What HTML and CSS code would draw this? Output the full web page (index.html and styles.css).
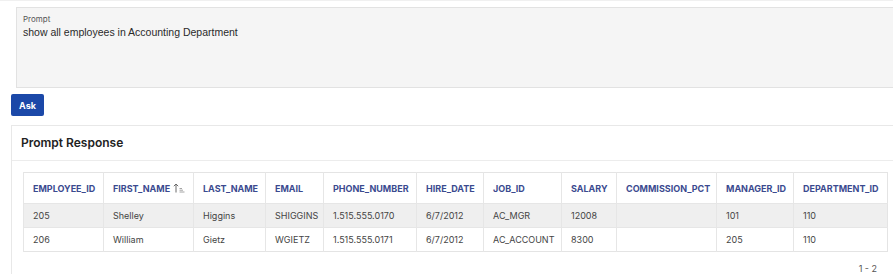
FILE: index.html
```html
<!DOCTYPE html>
<html>
<head>
<meta charset="UTF-8">
<title>Prompt</title>
<link rel="stylesheet" href="styles.css">
</head>
<body>
<div class="page">
  <div class="prompt">
    <label>Prompt</label>
    <div class="prompt-text">show all employees in Accounting Department</div>
  </div>
  <button class="ask">Ask</button>

  <div class="region">
    <div class="region-head">Prompt Response</div>
    <div class="region-body">
      <table class="grid">
        <colgroup>
          <col style="width:80px"><col style="width:90px"><col style="width:72px"><col style="width:58px">
          <col style="width:93px"><col style="width:67px"><col style="width:78px"><col style="width:55px">
          <col style="width:100px"><col style="width:77px"><col style="width:94px">
        </colgroup>
        <thead>
          <tr>
            <th>EMPLOYEE_ID</th>
            <th>FIRST_NAME <svg class="sort" width="12" height="10" viewBox="0 0 12 10"><path d="M3 9.5V1M0.8 3.2L3 1l2.2 2.2" fill="none" stroke="#6a6a6a" stroke-width="1"/><path d="M6.5 5.5h2.5M6.5 7.2h3.5M6.5 9h5" stroke="#9a9a9a" stroke-width="0.9"/></svg></th>
            <th>LAST_NAME</th>
            <th>EMAIL</th>
            <th>PHONE_NUMBER</th>
            <th>HIRE_DATE</th>
            <th>JOB_ID</th>
            <th>SALARY</th>
            <th>COMMISSION_PCT</th>
            <th>MANAGER_ID</th>
            <th>DEPARTMENT_ID</th>
          </tr>
        </thead>
        <tbody>
          <tr class="alt">
            <td>205</td><td>Shelley</td><td>Higgins</td><td>SHIGGINS</td><td>1.515.555.0170</td><td>6/7/2012</td><td>AC_MGR</td><td>12008</td><td></td><td>101</td><td>110</td>
          </tr>
          <tr>
            <td>206</td><td>William</td><td>Gietz</td><td>WGIETZ</td><td>1.515.555.0171</td><td>6/7/2012</td><td>AC_ACCOUNT</td><td>8300</td><td></td><td>205</td><td>110</td>
          </tr>
        </tbody>
      </table>
      <div class="pager">1 - 2</div>
    </div>
  </div>
</div>
</body>
</html>
```

FILE: styles.css
```css
body{margin:0;font-family:Inter,"Noto Sans",sans-serif;background:#fff;color:#333;overflow:hidden}
.page{width:920px;padding-top:1px;border-top:1px solid #f0f0f0}
.prompt{margin:5px 0 0 16px;height:81px;background:#f5f5f5;border:1px solid #e2e2e2;padding:6px 6px 0 6px;box-sizing:border-box}
.prompt label{display:block;font-size:8px;color:#555;line-height:10px}
.prompt-text{font-family:"Liberation Sans",Arial,sans-serif;font-size:10.5px;color:#2a2a2a;margin-top:2px}
.ask{display:block;margin:6px 0 0 11px;width:33px;height:22px;background:#1b48a8;color:#fff;border:none;border-radius:2px;font-family:inherit;font-size:9px;font-weight:700;padding:0}
.region{margin:9px 0 0 11px;border:1px solid #e8e8e8;border-right:none;border-bottom:none;background:#fff}
.region-head{height:34px;line-height:34px;padding-left:9px;font-size:12px;font-weight:600;color:#222;border-bottom:1px solid #ececec}
.region-body{padding:11px 0 0 11px;width:864px}
.grid{border-collapse:collapse;table-layout:fixed;width:864px;font-size:9px;border:1px solid #e4e4e4}
.grid th{height:30px;text-align:left;padding:0 9px;color:#3b4a8f;font-weight:700;font-size:9px;border-left:1px solid #e6e6e6;white-space:nowrap;background:#fff}
.grid td{height:23px;padding:0 9px;color:#444;border-left:1px solid #e6e6e6;border-top:1px solid #e6e6e6;white-space:nowrap}
.grid tr.alt td{background:#efefef}
.sort{vertical-align:-1px;margin-left:1px}
.pager{text-align:right;font-size:9px;color:#555;padding:11px 10px 0 0}
```
